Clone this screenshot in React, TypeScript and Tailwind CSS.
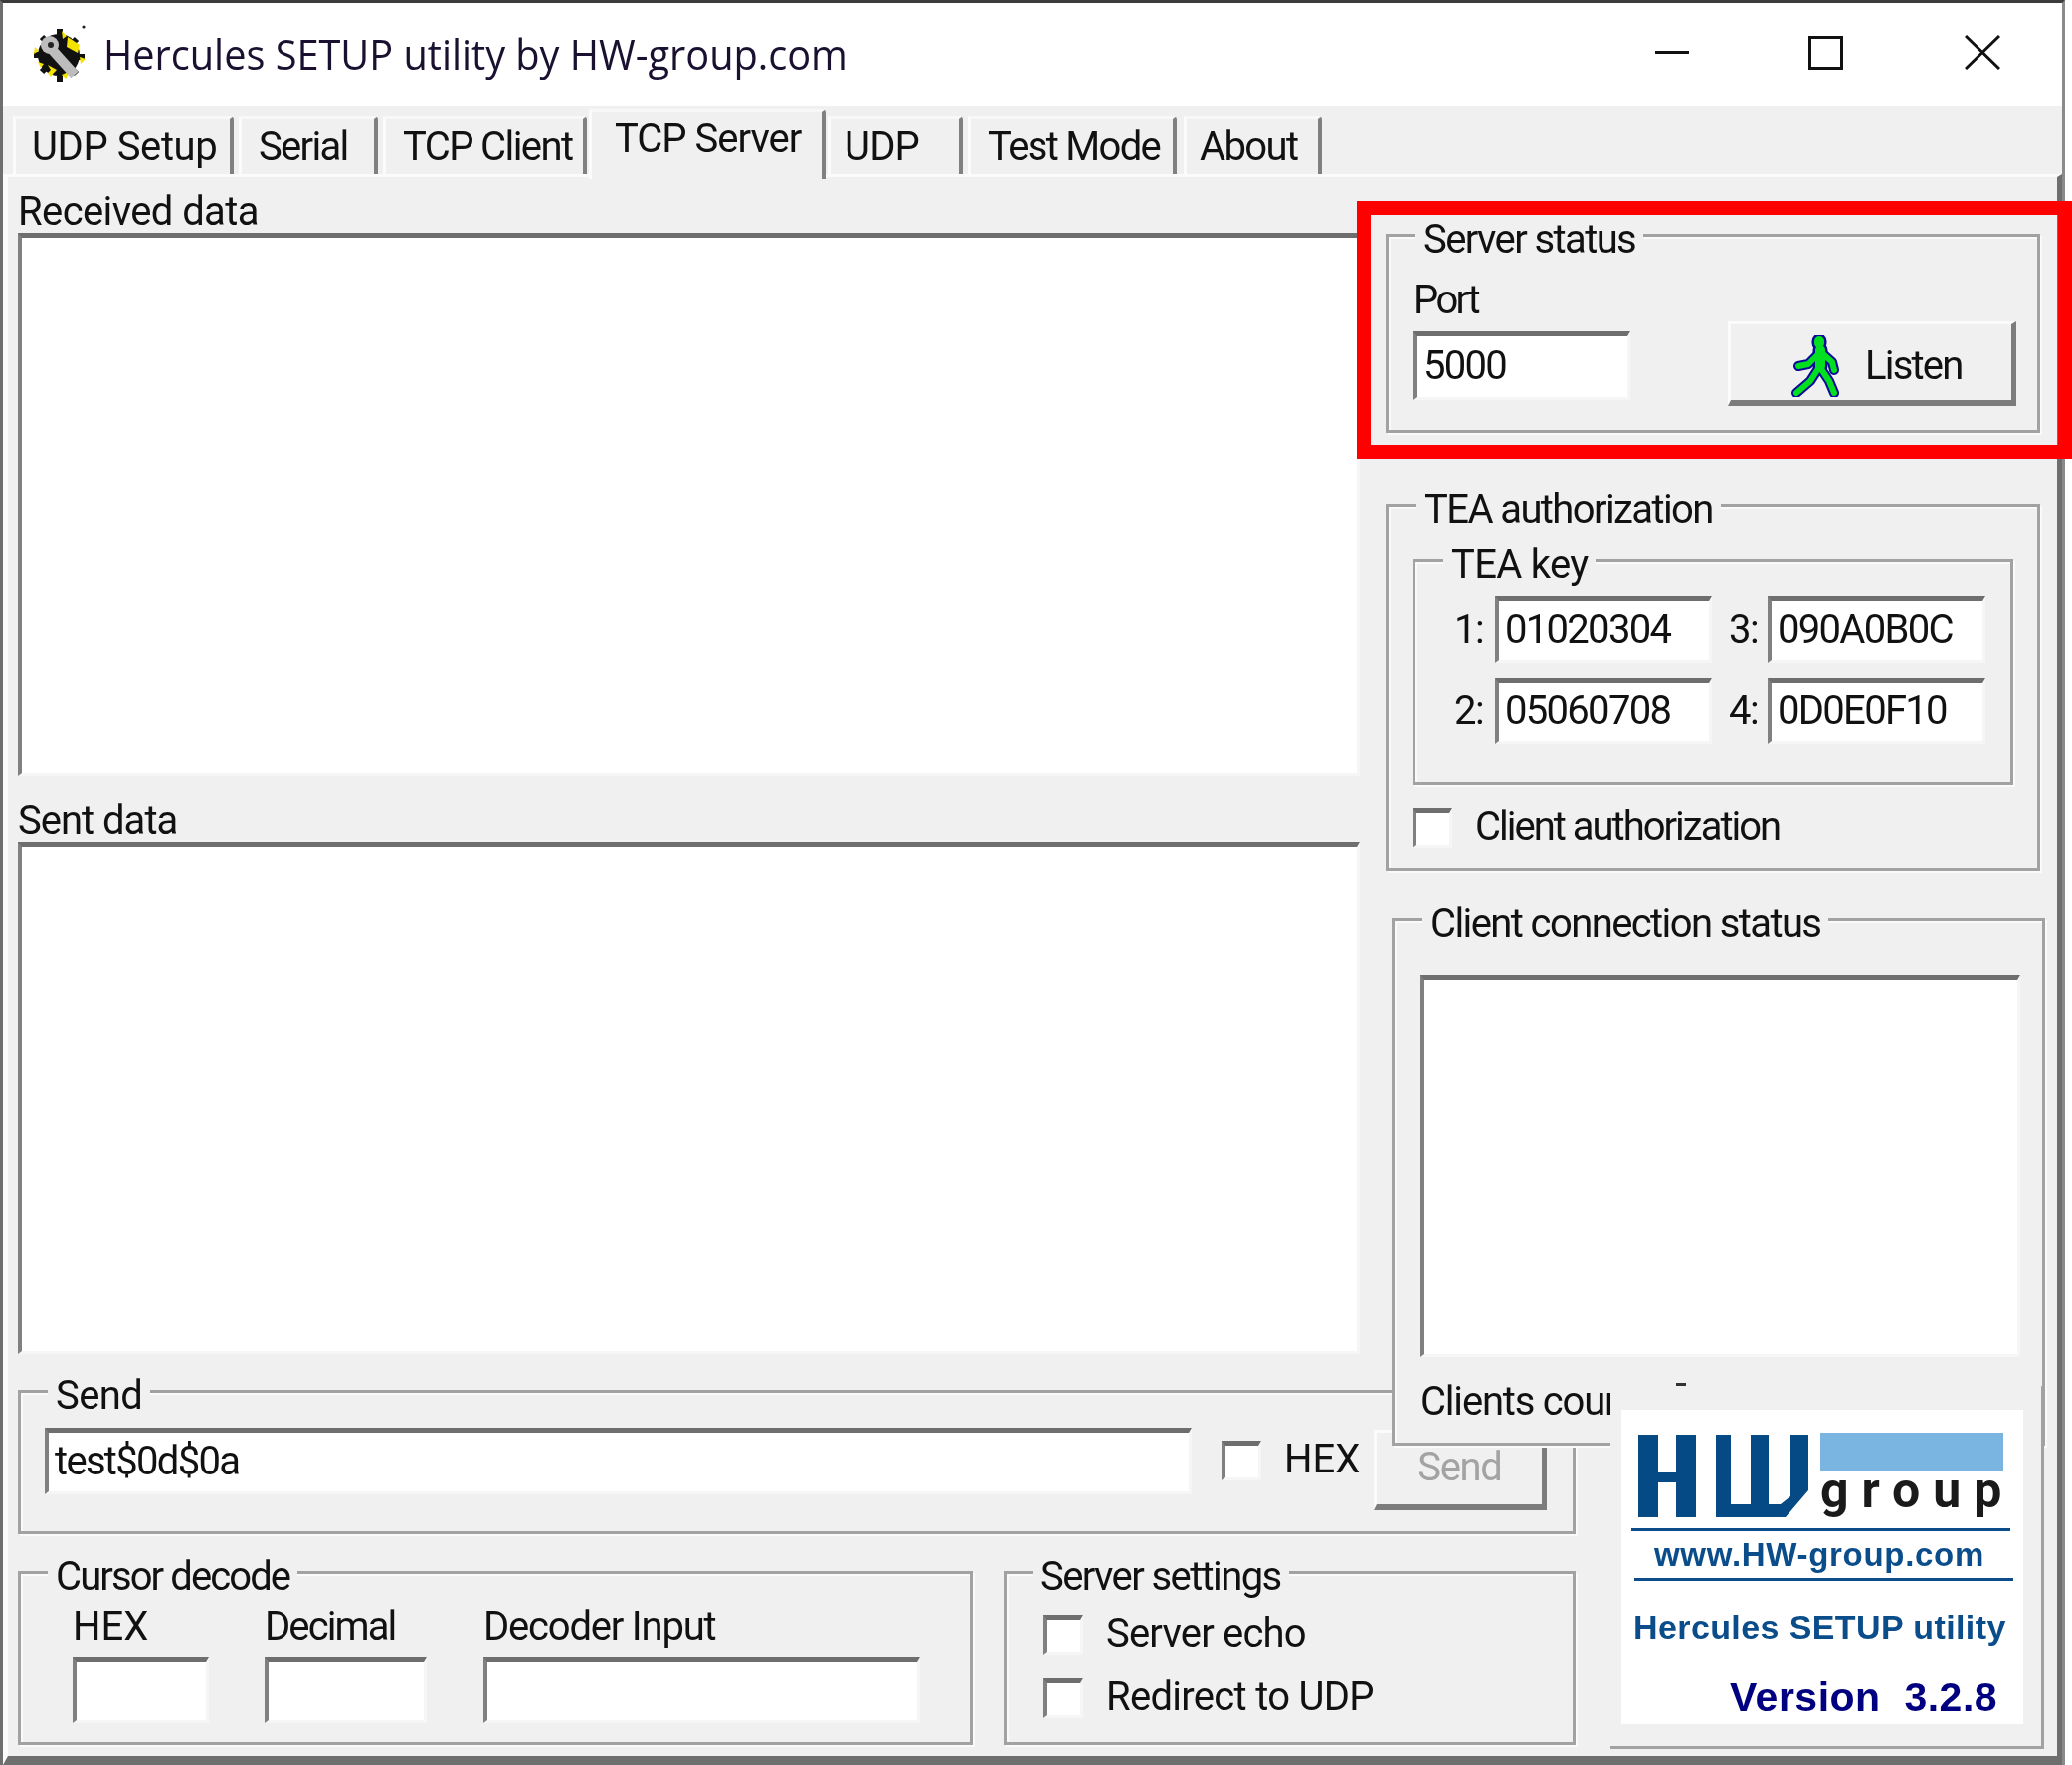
import React from 'react';

const tabs = [
  { label: 'UDP Setup', cls: 'w-[222px] pl-[16px] tracking-[-0.4px]' },
  { label: 'Serial', cls: 'ml-[5px] w-[140px] pl-[17px] tracking-[-1.7px]' },
  { label: 'TCP Client', cls: 'ml-[5px] w-[205px] pl-[17px] tracking-[-1.6px]' },
  { label: 'TCP Server', cls: 'relative z-10 ml-[2px] -mb-[5px] h-[70px] w-[238px] pl-[23px] pb-[14px] tracking-[-1px]' },
  { label: 'UDP', cls: 'ml-[2px] w-[136px] pl-[14px] tracking-[-0.8px]' },
  { label: 'Test Mode', cls: 'ml-[5px] w-[210px] pl-[17px] tracking-[-1.7px]' },
  { label: 'About', cls: 'ml-[7px] w-[139px] pl-[13px] tracking-[-1.6px]' },
];

const Sunken = ({ className, children }: { className: string; children?: React.ReactNode }) => (
  <div className={`box-border flex shrink-0 items-center border-t-[5px] border-l-[4px] border-r-[3px] border-b-[3px] border-t-[#6e6e6e] border-l-[#808080] border-r-[#f6f6f6] border-b-[#f6f6f6] bg-white pb-[2px] pl-[6px] leading-[42px] tracking-[-1.7px] ${className}`}>
    {children}
  </div>
);

const Group = ({ title, titleLeft, className, children }: { title: React.ReactNode; titleLeft: string; className: string; children?: React.ReactNode }) => (
  <div className={`relative box-border shrink-0 border-[3px] border-[#a2a2a2] bg-[#f0f0f0] shadow-[inset_2px_2px_0_#fafafa,2px_2px_0_#fafafa] ${className}`}>
    <span className={`absolute -top-[18px] whitespace-nowrap bg-[#f0f0f0] px-[8px] leading-[42px] tracking-[-1.6px] ${titleLeft}`}>{title}</span>
    {children}
  </div>
);

const Check = ({ label, className, labelCls }: { label: string; className?: string; labelCls: string }) => (
  <div className={`flex items-center ${className ?? ''}`}>
    <Sunken className="h-[40px] w-[40px]" />
    <span className={`-mt-[2px] ml-[23px] whitespace-nowrap leading-[42px] ${labelCls}`}>{label}</span>
  </div>
);

const Raised = ({ className, children }: { className: string; children?: React.ReactNode }) => (
  <div className={`box-border flex shrink-0 items-center border-t-[3px] border-l-[3px] border-r-[5px] border-b-[6px] border-t-[#fbfbfb] border-l-[#fbfbfb] border-r-[#7c7c7c] border-b-[#7c7c7c] bg-[#f0f0f0] ${className}`}>
    {children}
  </div>
);

const AppIcon = () => (
  <svg width="60" height="60" viewBox="0 0 60 60" className="shrink-0">
    <circle cx="29" cy="30" r="21" fill="#111" />
    <path d="M12 12l6 6M30 4v8M47 14l-6 6M55 32h-8M47 49l-6-6M30 57v-8M12 47l6-6M4 30h8" stroke="#111" strokeWidth="6" />
    <path d="M32 6l5 5-4 3zM38 12l12 8-2 8-11-6zM50 32l6 2-5 5zM41 46l-5 8-4-4zM18 40l9 5-3 3-3 4-3-4 3-3zM5 22l4 4-5 3zM8 37l6 2-3 4z" fill="#f4e300" />
    <path d="M18 20l27 30" stroke="#bdbdbd" strokeWidth="10" />
    <circle cx="20" cy="20" r="9" fill="#bdbdbd" />
    <circle cx="21" cy="20" r="3" fill="#222" />
    <circle cx="54" cy="2" r="1.6" fill="#222" />
  </svg>
);

const Runner = () => (
  <svg width="50" height="62" viewBox="0 0 50 62" className="shrink-0">
    <g fill="none" strokeLinecap="round" strokeLinejoin="round">
      <g stroke="#0a0a96">
        <path d="M29 6v2M30 15v16" strokeWidth="15" />
        <path d="M27 20l-9 9-10 2M33 19l9 8 2 8M29 32l-9 14-14 12M31 34l8 12 5 12" strokeWidth="10" />
      </g>
      <g stroke="#00e020">
        <path d="M29 6v2M30 15v16" strokeWidth="10" />
        <path d="M27 20l-9 9-10 2M33 19l9 8 2 8M29 32l-9 14-14 12M31 34l8 12 5 12" strokeWidth="6" />
      </g>
    </g>
  </svg>
);

const HwMark = () => (
  <svg width="174" height="85" viewBox="0 0 174 85" className="shrink-0">
    <path d="M1 2h20v38h18V2h20v83H39V50H21v35H1z" fill="#064a85" />
    <path d="M79 2h15v70h20V2h18v70h12l10-8V2h18v56l-23 27H79z" fill="#064a85" />
  </svg>
);

export default function App() {
  return (
    <div className="relative h-[1774px] w-[2083px] overflow-hidden bg-white font-['Roboto',sans-serif] text-[40px] tracking-[-1.4px] text-[#111] blur-[0.5px]">
      <div className="box-border flex h-full w-[2076px] flex-col border-t-[3px] border-l-[3px] border-r-[3px] border-t-[#3c3c3c] border-l-[#6e6e6e] border-r-[#8a8a8a]">
        {/* title bar */}
        <div className="flex h-[104px] shrink-0 items-center bg-white pl-[27px]">
          <AppIcon />
          <span className="-mt-[2px] ml-[14px] origin-left scale-x-[0.945] whitespace-nowrap font-['Open_Sans',sans-serif] text-[42px] leading-[52px] tracking-normal text-[#1a1030]">
            Hercules SETUP utility by HW-group.com
          </span>
          <div className="-mt-[5px] ml-auto flex items-center pr-[62px]">
            <div className="h-[3px] w-[34px] bg-[#111]" />
            <div className="ml-[120px] h-[34px] w-[35px] border-[3px] border-[#111]" />
            <svg width="36" height="35" viewBox="0 0 36 35" className="ml-[122px]">
              <path d="M1 1l34 33M35 1L1 34" stroke="#111" strokeWidth="3" fill="none" />
            </svg>
          </div>
        </div>

        {/* tabs */}
        <div className="flex h-[68px] shrink-0 items-end bg-[#f0f0f0] pl-[10px]">
          {tabs.map(t => (
            <div
              key={t.label}
              className={`box-border flex h-[58px] shrink-0 items-center whitespace-nowrap rounded-tr-[4px] border-t-[3px] border-l-[3px] border-r-[4px] border-t-[#f8f8f8] border-l-[#fbfbfb] border-r-[#808080] bg-[#f0f0f0] leading-[42px] ${t.cls}`}
            >
              {t.label}
            </div>
          ))}
        </div>

        {/* page */}
        <div className="box-border flex min-h-0 flex-1 border-t-[3px] border-l-[5px] border-r-[5px] border-b-[9px] border-t-[#fbfbfb] border-l-[#fbfbfb] border-r-[#6e6e6e] border-b-[#6e6e6e] bg-[#f0f0f0] pl-[10px]">
          <div className="w-[1349px] shrink-0">
            <div className="h-[56px] pt-[14px] leading-[42px] tracking-[-0.6px]">Received data</div>
            <Sunken className="h-[546px] w-[1349px]" />
            <div className="h-[66px] pt-[23px] leading-[43px] tracking-[-1px]">Sent data</div>
            <Sunken className="h-[515px] w-[1349px]" />

            <Group title={<span className="tracking-[-0.6px]">Send</span>} titleLeft="left-[27px]" className="mt-[36px] h-[145px] w-[1566px]">
              <div className="flex items-start pt-[35px] pl-[24px]">
                <Sunken className="h-[67px] w-[1153px]">test$0d$0a</Sunken>
                <Check label="HEX" labelCls="tracking-normal" className="ml-[30px] mt-[13px]" />
                <Raised className="ml-[14px] mt-[2px] h-[81px] w-[174px] justify-center pb-[3px] text-[#a3a3a3]">Send</Raised>
              </div>
            </Group>

            <div className="mt-[37px] flex w-[1566px] justify-between">
              <Group title={<span className="tracking-[-1.9px]">Cursor decode</span>} titleLeft="left-[27px]" className="h-[175px] w-[960px]">
                <div className="flex pt-[32px] pl-[52px]">
                  <div className="w-[137px]">
                    <div className="h-[51px] leading-[42px] tracking-normal">HEX</div>
                    <Sunken className="h-[67px] w-[137px]" />
                  </div>
                  <div className="ml-[56px] w-[163px]">
                    <div className="h-[51px] leading-[42px] tracking-[-1.9px]">Decimal</div>
                    <Sunken className="h-[67px] w-[163px]" />
                  </div>
                  <div className="ml-[57px] w-[439px]">
                    <div className="h-[51px] leading-[42px] tracking-[-1.2px]">Decoder Input</div>
                    <Sunken className="h-[67px] w-[439px]" />
                  </div>
                </div>
              </Group>
              <Group title="Server settings" titleLeft="left-[26px]" className="h-[175px] w-[575px]">
                <div className="flex flex-col gap-[24px] pt-[41px] pl-[37px]">
                  <Check label="Server echo" labelCls="tracking-[-0.8px]" />
                  <Check label="Redirect to UDP" labelCls="tracking-[-0.7px]" />
                </div>
              </Group>
            </div>
          </div>

          <div className="relative z-10 ml-[26px] shrink-0 pt-[57px]">
            <Group title="Server status" titleLeft="left-[27px]" className="h-[200px] w-[658px]">
              <div className="flex items-start pl-[25px]">
                <div className="pt-[43px]">
                  <div className="h-[52px] leading-[42px] tracking-[-2.6px]">Port</div>
                  <Sunken className="h-[69px] w-[218px]">5000</Sunken>
                </div>
                <Raised className="ml-[98px] mt-[85px] h-[85px] w-[290px] pt-[7px] pl-[60px]">
                  <Runner />
                  <span className="ml-[25px] tracking-[-1.8px]">Listen</span>
                </Raised>
              </div>
            </Group>

            <Group title="TEA authorization" titleLeft="left-[28px]" className="mt-[72px] h-[368px] w-[658px]">
              <div className="pt-[52px] pl-[24px]">
                <Group title={<span className="tracking-[-0.7px]">TEA key</span>} titleLeft="left-[28px]" className="h-[227px] w-[604px]">
                  <div className="grid grid-cols-[41px_218px_56px_219px] grid-rows-[67px_67px] items-center gap-y-[15px] pt-[34px] pl-[39px]">
                    <span>1:</span>
                    <Sunken className="h-[67px]">01020304</Sunken>
                    <span className="ml-[17px]">3:</span>
                    <Sunken className="h-[67px]">090A0B0C</Sunken>
                    <span>2:</span>
                    <Sunken className="h-[67px]">05060708</Sunken>
                    <span className="ml-[17px]">4:</span>
                    <Sunken className="h-[67px]">0D0E0F10</Sunken>
                  </div>
                </Group>
                <Check label="Client authorization" labelCls="tracking-[-2px]" className="mt-[23px]" />
              </div>
            </Group>

            <Group title="Client connection status" titleLeft="left-[28px]" className="mt-[48px] ml-[6px] h-[530px] w-[657px]">
              <div className="pt-[54px] pl-[26px]">
                <Sunken className="h-[384px] w-[603px]" />
                <div className="mt-[24px] whitespace-nowrap leading-[42px] tracking-[-1.2px]">Clients count</div>
              </div>
              {/* top of a glyph showing above the logo panel */}
              <div className="absolute top-[464px] left-[283px] h-[3px] w-[10px] bg-[#333]" />
            </Group>
          </div>
        </div>
      </div>

      {/* logo panel lies over the client status group */}
      <div className="absolute top-[1393px] left-[1619px] z-20 box-border h-[365px] w-[436px] border-r-[3px] border-b-[3px] border-[#a2a2a2] bg-[#f0f0f0] pt-[24px] pl-[11px]">
        <div className="h-[316px] w-[404px] bg-white pt-[23px] font-['Liberation_Sans',sans-serif] font-bold text-[#0a4d8a]">
          <div className="flex pl-[16px]">
            <HwMark />
            <div className="ml-[10px]">
              <div className="h-[38px] w-[184px] bg-[#7ab5e2]" />
              <div className="-mt-[6px] font-['Roboto',sans-serif] text-[50px] leading-[52px] tracking-[13px] text-[#1a1a1a]">group</div>
            </div>
          </div>
          <div className="mt-[11px] ml-[10px] h-[3px] w-[381px] bg-[#0a4d8a]" />
          <div className="ml-[33px] h-[47px] text-[33px] leading-[47px] tracking-[0.7px]">www.HW-group.com</div>
          <div className="ml-[13px] h-[3px] w-[381px] bg-[#0a4d8a]" />
          <div className="mt-[25px] ml-[12px] text-[34px] leading-[42px] tracking-[0.4px]">Hercules SETUP utility</div>
          <div className="mt-[26px] ml-[109px] whitespace-pre text-[41px] leading-[48px] tracking-[0.5px] text-[#000080]">Version  3.2.8</div>
        </div>
      </div>

      {/* red highlight round the server status group */}
      <div className="absolute top-[202px] left-[1364px] z-30 box-border h-[259px] w-[719px] border-[14px] border-[#ff0000]" />
    </div>
  );
}
